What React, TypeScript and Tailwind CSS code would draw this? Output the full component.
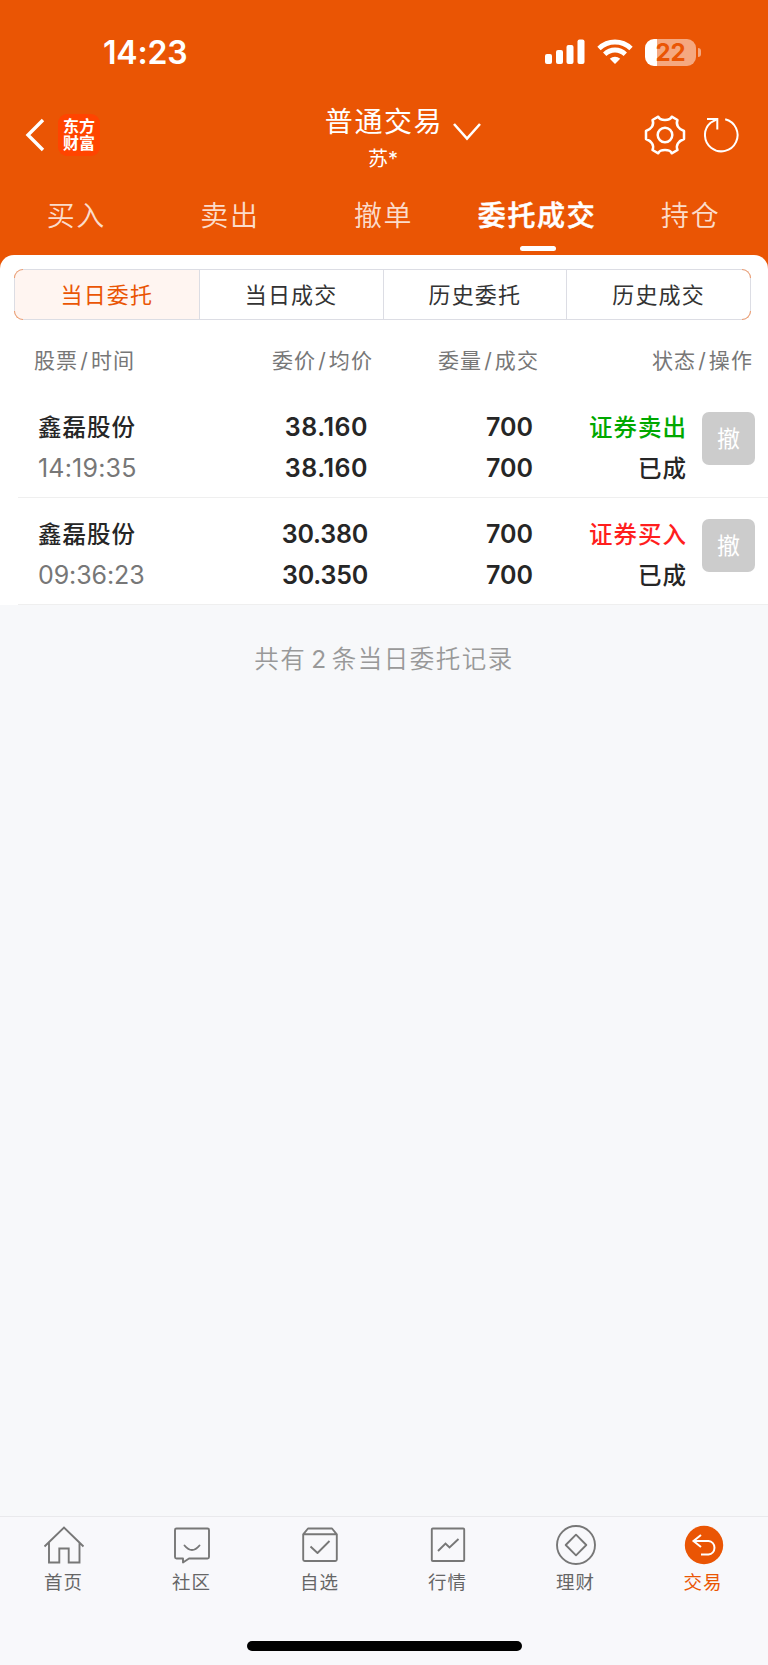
import React from "react";

const tabs = ["买入", "卖出", "撤单", "委托成交", "持仓"];
const segments = ["当日委托", "当日成交", "历史委托", "历史成交"];

type Order = {
  name: string;
  time: string;
  price: string;
  average: string;
  quantity: string;
  filled: string;
  side: "sell" | "buy";
  status: string;
};

const orders: Order[] = [
  { name: "鑫磊股份", time: "14:19:35", price: "38.160", average: "38.160", quantity: "700", filled: "700", side: "sell", status: "已成" },
  { name: "鑫磊股份", time: "09:36:23", price: "30.380", average: "30.350", quantity: "700", filled: "700", side: "buy", status: "已成" },
];

function StatusBar() {
  return (
    <div className="flex h-[100px] items-center justify-between pr-[67px] pl-[103px]">
      <span className="pt-[5px] text-[32px] leading-none font-semibold tracking-[-0.2px] text-white">14:23</span>
      <div className="flex items-center pt-[4px]">
        <svg width="40" height="26" viewBox="0 0 40 26" fill="#fff">
          <rect x="0" y="15" width="7" height="10" rx="2" />
          <rect x="11" y="11" width="7" height="14" rx="2" />
          <rect x="21.5" y="6" width="7" height="19" rx="2" />
          <rect x="32.5" y="0.5" width="7" height="24.5" rx="2" />
        </svg>
        <svg className="ml-[12px]" width="36" height="26" viewBox="0 0 36 26" fill="none" stroke="#fff" strokeWidth="4.8">
          <path d="M2 9.5C11 0.8 25 0.8 34 9.5" />
          <path d="M7.7 15.2C13.5 9.6 22.5 9.6 28.3 15.2" />
          <path d="M18 25L12.8 19.7C15.7 17 20.3 17 23.2 19.7Z" fill="#fff" stroke="none" />
        </svg>
        <div className="ml-[12px] flex h-[27px] w-[51px] items-center justify-center rounded-[9px] bg-gradient-to-r from-white from-[23%] to-[#f5a880] to-[23%]">
          <span className="text-[24px] leading-[27px] font-bold text-[#ea5504]">22</span>
        </div>
        <div className="ml-[2px] h-[9px] w-[3px] rounded-r-full bg-[#f5a880]" />
      </div>
    </div>
  );
}

function TitleBar() {
  return (
    <div className="grid h-[80px] grid-cols-[1fr_auto_1fr] text-white">
      <div className="flex items-center pb-[10px] pl-[25px]">
        <svg width="20" height="34" viewBox="0 0 20 34" fill="none" stroke="#fff" strokeWidth="3.4">
          <path d="M18 2L3 17L18 32" />
        </svg>
        <div className="ml-[13px] flex h-[42px] w-[42px] flex-col items-center justify-center rounded-[9px] bg-[#ff4400] text-[16px] leading-[17.5px] font-bold">
          <span>东方</span>
          <span>财富</span>
        </div>
      </div>
      <div className="flex flex-col items-center">
        <div className="flex h-[42px] items-center pt-[1px] text-[28px] tracking-[1.6px]">普通交易</div>
        <div className="flex h-[32px] items-center pt-[1px] pr-[2px] text-[20px]">苏*</div>
      </div>
      <div className="flex items-center pb-[10px]">
        <svg className="mt-[-7px] ml-[9px]" width="30" height="18" viewBox="0 0 30 18" fill="none" stroke="#fff" strokeWidth="2.6">
          <path d="M2 1L15 15.5L28 1" />
        </svg>
        <svg className="ml-auto" width="42" height="42" viewBox="0 0 42 42" fill="none" stroke="#fff" strokeWidth="2.5" strokeLinejoin="round">
          <path d="M14.3 2.7C16 7 26 7 27.7 2.7L33.5 6C31.5 11 34.5 15 40 17V25C34.5 27 31.5 31 33.5 36L27.7 39.3C26 35 16 35 14.3 39.3L8.5 36C10.5 31 7.5 27 2 25V17C7.5 15 10.5 11 8.5 6Z" />
          <circle cx="21" cy="21" r="7.3" />
        </svg>
        <svg className="mr-[28px] ml-[18px]" width="36" height="38" viewBox="0 0 36 38" fill="none" stroke="#fff" strokeWidth="2">
          <path d="M21.2 3.2A16.3 16.3 0 1 1 6.6 6.7L13.3 3" />
          <path d="M3 3H13.3V13.5" />
        </svg>
      </div>
    </div>
  );
}

function MainTabs() {
  return (
    <nav className="grid h-[75px] grid-cols-5">
      {tabs.map((tab) => {
        const active = tab === "委托成交";
        return (
          <div key={tab} className="flex flex-col items-center">
            <div
              className={
                active
                  ? "flex h-[66px] items-center pt-[6px] pr-[1px] text-[28px] font-medium tracking-[1.7px] whitespace-nowrap text-white [-webkit-text-stroke:0.5px_white]"
                  : "flex h-[66px] items-center pt-[6px] pr-[1px] text-[28px] font-[350] tracking-[1.6px] whitespace-nowrap text-[#fbdccb]"
              }
            >
              {tab}
            </div>
            {active && <div className="h-[5px] w-[36px] rounded-full bg-white" />}
          </div>
        );
      })}
    </nav>
  );
}

function SegmentedControl() {
  return (
    <div className="relative mr-[17px] ml-[14px]">
      <div className="grid h-[51px] grid-cols-4 overflow-hidden rounded-[9px] border border-[#dcdde4]">
        {segments.map((segment, index) => (
          <div
            key={segment}
            className={
              index === 0
                ? "flex items-center justify-center bg-[#fff5f1] pt-[1px] text-[22px] tracking-[1.2px] text-[#ea5504]"
                : "flex items-center justify-center border-l border-[#dcdde4] pt-[1px] text-[22px] tracking-[1.2px] text-[#333]"
            }
          >
            {segment}
          </div>
        ))}
      </div>
      <span className="absolute top-0 left-0 h-[9px] w-[9px] rounded-tl-[9px] border-t border-l border-[#f09a6a]" />
      <span className="absolute bottom-0 left-0 h-[9px] w-[9px] rounded-bl-[9px] border-b border-l border-[#f09a6a]" />
      <span className="absolute top-0 right-0 h-[9px] w-[9px] rounded-tr-[9px] border-t border-r border-[#f09a6a]" />
      <span className="absolute right-0 bottom-0 h-[9px] w-[9px] rounded-br-[9px] border-r border-b border-[#f09a6a]" />
    </div>
  );
}

function ColumnTitle({ first, second, className }: { first: string; second: string; className: string }) {
  return (
    <div className={className}>
      {first}
      <span className="mx-[2px]">/</span>
      {second}
    </div>
  );
}

function OrderRow({ order }: { order: Order }) {
  const priceClass = order.price.includes("1") ? "tracking-[0.5px]" : "tracking-[-0.2px]";
  return (
    <div className="flex h-[107px] pl-[18px]">
      <div className="flex flex-1 border-b border-[#efefef] pt-[16px] pr-[13px] text-[25px] leading-[41px] font-semibold text-[#262626]">
        <div className="w-[150px] pl-[20px]">
          <div className="text-[23.5px] font-medium tracking-[1px]">{order.name}</div>
          <div className={order.time.includes("1") ? "font-normal tracking-[0.2px] text-[#777]" : "font-normal tracking-[-0.1px] text-[#777]"}>{order.time}</div>
        </div>
        <div className="w-[200px] text-right">
          <div className={priceClass}>{order.price}</div>
          <div className={priceClass}>{order.average}</div>
        </div>
        <div className="w-[165px] text-right">
          <div>{order.quantity}</div>
          <div>{order.filled}</div>
        </div>
        <div className="w-[154px] text-right text-[23.5px] font-medium tracking-[1px]">
          <div className={order.side === "sell" ? "text-[#00a800]" : "text-[#ff1e1e]"}>{order.side === "sell" ? "证券卖出" : "证券买入"}</div>
          <div>{order.status}</div>
        </div>
        <button className="mt-[5px] ml-auto h-[53px] w-[53px] rounded-[7px] bg-[#ccc] text-[23px] leading-[54px] font-normal text-white">撤</button>
      </div>
    </div>
  );
}

function HomeIcon() {
  return (
    <svg width="42" height="42" viewBox="0 0 42 42" fill="none" stroke="#777" strokeWidth="1.9">
      <path d="M1.5 22.5L21 3.5L40.5 22.5M6 18.5V38.5H16.3V24.5H25.7V38.5H36.5V18.5" />
    </svg>
  );
}

function CommunityIcon() {
  return (
    <svg width="42" height="42" viewBox="0 0 42 42" fill="none" stroke="#777" strokeWidth="1.9" strokeLinejoin="round" strokeLinecap="round">
      <path d="M5.5 4.5H36.5Q38 4.5 38 6V33Q38 34.5 36.5 34.5H18L12 38.5V34.5H5.5Q4 34.5 4 33V6Q4 4.5 5.5 4.5Z" />
      <path d="M13.5 21.5Q21 30.5 28.5 21.5" />
    </svg>
  );
}

function WatchlistIcon() {
  return (
    <svg width="42" height="42" viewBox="0 0 42 42" fill="none" stroke="#777" strokeWidth="1.9" strokeLinejoin="round">
      <path d="M4.2 10.3L9 4.5H33L37.8 10.3V35.5Q37.8 37 36.3 37H5.7Q4.2 37 4.2 35.5ZM4.2 10.3H37.8" />
      <path d="M11.5 22.5L18.5 29L30.5 17" />
    </svg>
  );
}

function MarketIcon() {
  return (
    <svg width="42" height="42" viewBox="0 0 42 42" fill="none" stroke="#777" strokeWidth="1.9">
      <rect x="4.8" y="4.5" width="32.4" height="32.5" rx="1" />
      <path d="M11 27L18.5 19.5L22.5 23.5L31.5 15" />
    </svg>
  );
}

function WealthIcon() {
  return (
    <svg width="42" height="42" viewBox="0 0 42 42" fill="none" stroke="#777" strokeWidth="1.9" strokeLinejoin="round">
      <circle cx="21" cy="21" r="19" />
      <path d="M21 10.7L31.3 21L21 31.3L10.7 21Z" />
    </svg>
  );
}

function TradeIcon() {
  return (
    <svg width="42" height="42" viewBox="0 0 42 42" fill="none" stroke="#fff" strokeWidth="2">
      <circle cx="21" cy="21" r="19.2" fill="#ea5504" stroke="none" />
      <path d="M18 11L10.5 17L18 23M10.5 17H25.5A6.8 6.8 0 0 1 25.5 30.5H18" />
    </svg>
  );
}

const navItems = [
  { label: "首页", Icon: HomeIcon },
  { label: "社区", Icon: CommunityIcon },
  { label: "自选", Icon: WatchlistIcon },
  { label: "行情", Icon: MarketIcon },
  { label: "理财", Icon: WealthIcon },
  { label: "交易", Icon: TradeIcon },
];

export default function App() {
  return (
    <div className="flex h-[1665px] w-[768px] flex-col overflow-hidden bg-[#f7f8fa] font-[Inter,'Noto_Sans_CJK_SC',sans-serif]">
      <header className="bg-[#ea5504]">
        <StatusBar />
        <TitleBar />
        <MainTabs />
      </header>
      <div className="bg-gradient-to-b from-[#ea5504] from-[20px] to-white to-[20px]">
        <main className="rounded-t-[14px] bg-white pt-[14px]">
          <SegmentedControl />
          <div className="flex h-[71px] items-center pt-[11px] pr-[15px] pl-[34px] text-[21px] tracking-[1.1px] text-[#777]">
            <ColumnTitle className="w-[134px]" first="股票" second="时间" />
            <ColumnTitle className="w-[205px] text-right" first="委价" second="均价" />
            <ColumnTitle className="w-[166px] text-right" first="委量" second="成交" />
            <ColumnTitle className="flex-1 text-right" first="状态" second="操作" />
          </div>
          {orders.map((order) => (
            <OrderRow key={order.time} order={order} />
          ))}
        </main>
      </div>
      <div className="flex h-[108px] items-center justify-center text-[24.5px] font-[350] tracking-[1.5px] text-[#999]">
        共有<span className="mr-[4px] ml-[5px] font-normal">2</span>条当日委托记录
      </div>
      <footer className="mt-auto flex h-[149px] flex-col border-t border-[#e9e9ec] bg-[#f8f8fb]">
        <nav className="grid grid-cols-6 pt-[7px]">
          {navItems.map(({ label, Icon }) => (
            <div key={label} className="flex flex-col items-center">
              <Icon />
              <span className={label === "交易" ? "pr-[2px] text-[18.5px] leading-[32px] tracking-[1.1px] text-[#ea5504]" : "pr-[1px] text-[18.5px] leading-[32px] tracking-[1.1px] text-[#666]"}>{label}</span>
            </div>
          ))}
        </nav>
        <div className="mx-auto mt-auto mb-[14px] h-[10px] w-[275px] rounded-full bg-black" />
      </footer>
    </div>
  );
}
